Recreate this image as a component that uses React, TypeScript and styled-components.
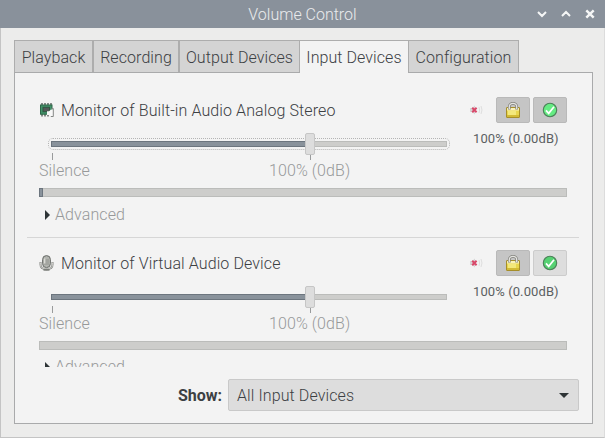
import React from "react";
import styled, { createGlobalStyle } from "styled-components";

const GlobalStyle = createGlobalStyle`
  * { box-sizing: border-box; }
  body {
    margin: 0;
    overflow: hidden;
    font: 300 16px/20px Roboto, sans-serif;
    letter-spacing: 0.1px;
    color: #3c4043;
    background: #ececeb;
  }
  svg { display: block; }
`;

const Window = styled.div`
  width: 605px;
  height: 438px;
  display: flex;
  flex-direction: column;
  background: #ececeb;
  border: 1px solid #c4c4c4;
  border-top: 0;
  border-right-color: #dcdcdc;
`;

const TitleBar = styled.header`
  height: 28px;
  flex: none;
  margin: 0 -1px;
  display: grid;
  grid-template-columns: 1fr auto 1fr;
  align-items: center;
  background: #89919b;
  color: #e9ebed;
`;

const Title = styled.h1`
  grid-column: 2;
  margin: 0;
  padding-top: 1px;
  font-size: 16px;
  font-weight: 300;
  letter-spacing: 0;
`;

const WindowButtons = styled.div`
  display: flex;
  justify-content: flex-end;
  gap: 12px;
  padding-right: 9px;
`;

const Notebook = styled.main`
  width: 579px;
  margin: 12px 0 0 13px;
`;

const Tabs = styled.nav`
  display: flex;
  height: 33px;
`;

const Tab = styled.button<{ $width: number; $active?: boolean }>`
  width: ${(p) => p.$width}px;
  height: ${(p) => (p.$active ? 33 : 32)}px;
  padding: ${(p) => (p.$active ? 1 : 2)}px 0 0;
  border: 1px solid #adadad;
  border-width: ${(p) => (p.$active ? "1px 0 0" : "1px 1px 0")};
  background: ${(p) => (p.$active ? "#f3f3f3" : "#d4d4d4")};
  color: inherit;
  font: inherit;
  letter-spacing: 0.07px;
  white-space: nowrap;
  position: relative;
  z-index: ${(p) => (p.$active ? 1 : 0)};
`;

const Panel = styled.section`
  height: 352px;
  margin-top: -1px;
  padding: 7px 13px 0 12px;
  border: 1px solid #a9aaab;
  background: #f3f3f3;
`;

const DeviceList = styled.div`
  height: 287px;
  overflow: hidden;
`;

const Device = styled.article`
  height: 153px;
  padding: 12px 12px 0;
`;

const Separated = styled(Device)`
  height: 158px;
  padding-top: 17px;
  border-bottom: 1px solid #d6d6d6;
`;

const DeviceHeader = styled.div`
  height: 36px;
  display: flex;
  align-items: flex-start;
`;

const DeviceIcon = styled.div`
  width: 16px;
  margin: 5px 6px 0 0;
`;

const DeviceName = styled.div`
  flex: 1;
  padding-top: 4px;
  white-space: nowrap;
`;

const MuteButton = styled.div`
  width: 23px;
  padding-top: 7px;
`;

const ToggleButton = styled.button<{ $pressed?: boolean }>`
  width: 34px;
  height: 26px;
  margin-left: 3px;
  padding: 0;
  display: grid;
  place-items: center;
  border: 1px solid ${(p) => (p.$pressed ? "#b9b9b9" : "#cccccc")};
  border-radius: 2px;
  background: ${(p) => (p.$pressed ? "#c5c5c5" : "#dddddd")};
`;

const VolumeRow = styled.div`
  display: flex;
  justify-content: space-between;
  height: 48px;
`;

const Scale = styled.div`
  width: 402px;
  margin-left: 9px;
`;

const FocusRing = styled.div<{ $focused?: boolean }>`
  height: 12px;
  margin-top: 5px;
  padding: 2px;
  border: 1px dotted ${(p) => (p.$focused ? "#b4b4b4" : "transparent")};
  border-radius: 5px;
`;

const Trough = styled.div`
  width: 396px;
  height: 6px;
  border: 1px solid #bbbcba;
  background: #cdcdcb;
  position: relative;
`;

const Highlight = styled.div`
  width: 257px;
  height: 6px;
  margin: -1px;
  border: 1px solid #6c757e;
  background: #89929b;
`;

const Handle = styled.div`
  position: absolute;
  left: 253px;
  top: -9px;
  width: 10px;
  height: 22px;
  border: 1px solid #c6c6c6;
  border-radius: 2px;
  background: #dddddd;
`;

const Ticks = styled.div`
  height: 11px;
  display: flex;
  gap: 257px;
  padding: 3px 0 0 4px;
`;

const Tick = styled.div`
  width: 1px;
  height: 7px;
  background: #999b9c;
`;

const Marks = styled.div`
  display: flex;
  margin-left: -9px;
  color: #97999a;
`;

const Mark = styled.span`
  width: 230px;
  white-space: nowrap;

  & + & {
    width: 82px;
  }
`;

const Value = styled.div`
  width: 94px;
  margin-top: -4px;
  font-size: 13px;
  font-weight: 400;
  color: #5b5f62;
  white-space: nowrap;
`;

const Level = styled.div`
  height: 9px;
  margin-top: 7px;
  border: 1px solid #bbbcba;
  background: #cdcdcb;
`;

const LevelFill = styled.div`
  width: 4px;
  height: 9px;
  margin: -1px;
  border: 1px solid #6c757e;
  background: #89929b;
`;

const Expander = styled.div<{ $raised?: boolean }>`
  display: flex;
  align-items: center;
  gap: 5px;
  padding-left: 6px;
  margin-top: ${(p) => (p.$raised ? 7 : 8)}px;
  color: #97999a;
`;

const Footer = styled.div`
  height: 32px;
  margin-top: 12px;
  display: flex;
  align-items: center;
  justify-content: flex-end;
`;

const ShowLabel = styled.span`
  margin-right: 6px;
  padding-top: 1px;
  letter-spacing: 0;
  font-weight: 700;
`;

const Combo = styled.div`
  width: 351px;
  height: 32px;
  padding: 1px 9px 0 8px;
  display: flex;
  align-items: center;
  justify-content: space-between;
  border: 1px solid #c9c9c9;
  border-radius: 2px;
  background: #dddddd;
`;

const LockIcon = () => (
  <svg width="16" height="16" viewBox="0 0 16 16">
    <rect x="1.5" y="5.5" width="13" height="10" rx="0.4" fill="#e8d64e" stroke="#a68e29" />
    <path d="M2 6h12v2.5H2z" fill="#faf3b8" />
    <path d="M3 9h8v4H3z" fill="#f3e87c" />
    <path d="M2 13h12v2H2z" fill="#d3bb35" />
    <path d="M4.3 7.5V4.7a3.7 3.4 0 0 1 7.4 0V7.5" fill="none" stroke="#85857f" strokeWidth="2.8" />
    <path d="M4.3 7V4.7a3.7 3.4 0 0 1 7.4 0V7" fill="none" stroke="#e4e4e1" strokeWidth="1.3" />
  </svg>
);

const CheckIcon = ({ pale }: { pale?: boolean }) => (
  <svg width="16" height="16" viewBox="0 0 16 16">
    <circle cx="8" cy="8" r="6.7" fill={pale ? "#55d272" : "#65ec83"} stroke="#4c8059" strokeWidth="1.1" />
    <path d="M4 8.4l2.7 3L12 4.7" fill="none" stroke="#fff" strokeWidth="1.7" />
  </svg>
);

const MuteIcon = () => (
  <svg width="14" height="12" viewBox="0 0 14 12">
    <path d="M0 4h2l3-2.5v9L2 8H0z" fill="#d5d5d5" />
    <path d="M9 3q1.3 3 0 6M11 2q2 4 0 8" fill="none" stroke="#dedede" />
    <path d="M2.2 3.8l4.4 4.4M6.6 3.8L2.2 8.2" stroke="#d9496a" strokeWidth="2" />
  </svg>
);

const ChipIcon = () => (
  <svg width="16" height="16" viewBox="0 0 16 16">
    <path d="M3 1v2.5M6 1v2.5M9 1v2.5M12 1v2.5M3 12v2.5M6 12v2.5M9 12v2.5" stroke="#7a7f7c" strokeWidth="1.8" />
    <rect x="1.5" y="3" width="11.5" height="9.2" fill="#42936a" stroke="#2e6748" />
    <rect x="4" y="5.3" width="6.5" height="4.4" fill="#55595a" stroke="#315640" />
    <path d="M8 9.2h2l2-1.8h2v7h-2l-2-1.5H8z" fill="#f8f8f8" />
    <path d="M12.5 6.5h1.8v8h-2.5" fill="none" stroke="#858886" />
  </svg>
);

const MicIcon = () => (
  <svg width="16" height="16" viewBox="0 0 16 16">
    <path d="M1.5 7v2.5q0 4.7 6 4.7t6-4.7V7" fill="none" stroke="#858784" strokeWidth="2" />
    <path d="M1.5 7.5v2q0 4.5 6 4.5t6-4.5v-2" fill="none" stroke="#deded9" strokeWidth="0.8" />
    <rect x="3.6" y="0.6" width="7.8" height="12" rx="3.9" fill="#b2b4af" stroke="#696c68" />
    <path d="M5 5h5M5 7h5M5 9h5" stroke="#8a8d88" strokeWidth="0.8" />
    <path d="M5.7 3.5v5" stroke="#deded9" strokeWidth="1.3" />
    <path d="M4.5 15h6" stroke="#656863" strokeWidth="1.2" />
  </svg>
);

type DeviceProps = {
  name: string;
  icon: React.ReactNode;
  focused?: boolean;
  fallback?: boolean;
  active?: boolean;
};

function DeviceContent({ name, icon, focused, fallback, active }: DeviceProps) {
  return (
    <>
      <DeviceHeader>
        <DeviceIcon>{icon}</DeviceIcon>
        <DeviceName>{name}</DeviceName>
        <MuteButton><MuteIcon /></MuteButton>
        <ToggleButton $pressed><LockIcon /></ToggleButton>
        <ToggleButton $pressed={fallback}><CheckIcon pale={!fallback} /></ToggleButton>
      </DeviceHeader>
      <VolumeRow>
        <Scale>
          <FocusRing $focused={focused}>
            <Trough><Highlight /><Handle /></Trough>
          </FocusRing>
          <Ticks><Tick /><Tick /></Ticks>
          <Marks><Mark>Silence</Mark><Mark>100% (0dB)</Mark></Marks>
        </Scale>
        <Value>100% (0.00dB)</Value>
      </VolumeRow>
      <Level>{active && <LevelFill />}</Level>
      <Expander $raised={!active}>
        <svg width="5" height="10" viewBox="0 0 5 10"><path d="M0 0l5 5-5 5z" fill="#2e3436" /></svg>
        Advanced
      </Expander>
    </>
  );
}

export default function App() {
  return (
    <>
      <GlobalStyle />
      <Window>
        <TitleBar>
          <Title>Volume Control</Title>
          <WindowButtons>
            <svg width="60" height="12" viewBox="0 0 60 12" fill="none" stroke="#f5f6f6" strokeWidth="2">
              <path d="M2 4l4 4 4-4M26 8l4-4 4 4" />
              <path d="M50.3 2.3l7.4 7.4M57.7 2.3l-7.4 7.4" strokeWidth="2.4" />
            </svg>
          </WindowButtons>
        </TitleBar>
        <Notebook>
          <Tabs>
            <Tab $width={79}>Playback</Tab>
            <Tab $width={86}>Recording</Tab>
            <Tab $width={121}>Output Devices</Tab>
            <Tab $width={108} $active>Input Devices</Tab>
            <Tab $width={111}>Configuration</Tab>
          </Tabs>
          <Panel>
            <DeviceList>
              <Separated as="article">
                <DeviceContent name="Monitor of Built-in Audio Analog Stereo" icon={<ChipIcon />} focused fallback active />
              </Separated>
              <Device>
                <DeviceContent name="Monitor of Virtual Audio Device" icon={<MicIcon />} />
              </Device>
            </DeviceList>
            <Footer>
              <ShowLabel>Show:</ShowLabel>
              <Combo>
                All Input Devices
                <svg width="10" height="5" viewBox="0 0 10 5"><path d="M0 0h10L5 5z" fill="#2e3436" /></svg>
              </Combo>
            </Footer>
          </Panel>
        </Notebook>
      </Window>
    </>
  );
}
